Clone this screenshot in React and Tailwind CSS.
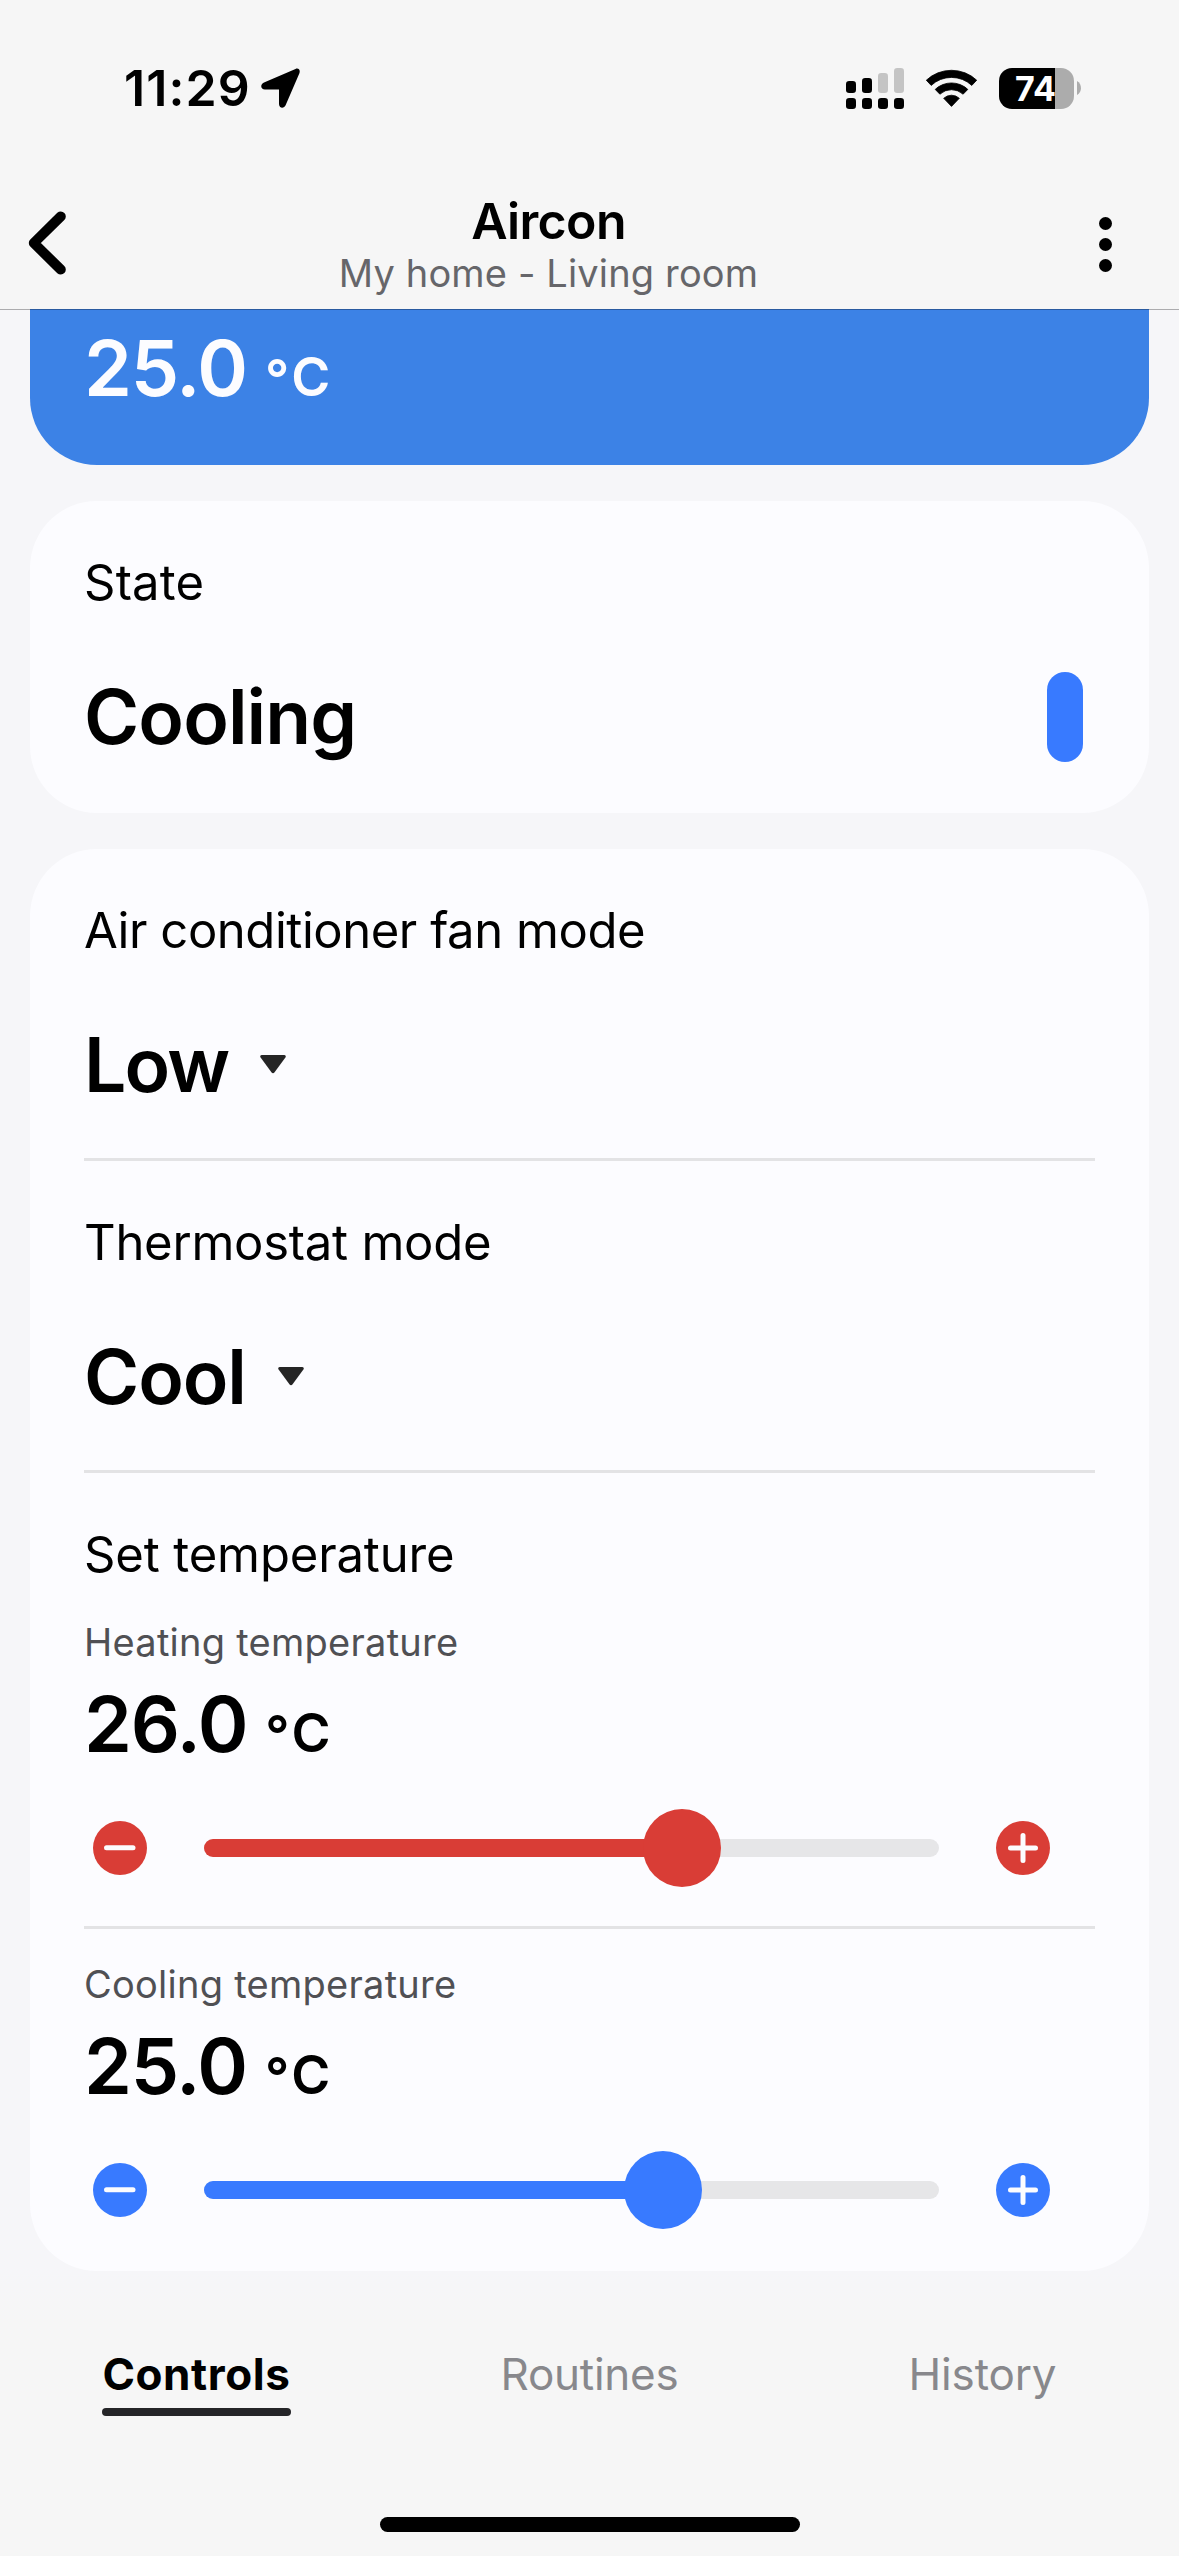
import React from "react";

function SignalIcon() {
  const bars = [
    { x: 0, y: 13, h: 12, fill: "#000" },
    { x: 16, y: 10, h: 15, fill: "#000" },
    { x: 32, y: 5, h: 20, fill: "#c4c4c4" },
    { x: 48, y: 0, h: 25, fill: "#c4c4c4" },
  ];
  return (
    <svg width="58" height="41" viewBox="0 0 58 41">
      {bars.map((b) => (
        <g key={b.x}>
          <rect x={b.x} y={b.y} width="10" height={b.h} rx="3.2" fill={b.fill} />
          <rect x={b.x} y="30" width="10" height="11" rx="3.2" fill="#000" />
        </g>
      ))}
    </svg>
  );
}

function WifiIcon() {
  return (
    <svg width="51" height="41" viewBox="0 0 51 41" className="ml-[22px]">
      <g stroke="#000" strokeWidth="0.8" strokeLinejoin="round">
        <path d="M.3 12.2A37 37 0 0 1 50.7 12.2L45.8 17.4A29.8 29.8 0 0 0 5.2 17.4Z" />
        <path d="M9.2 21.4A23.8 23.8 0 0 1 41.8 21.4L37.1 26.2A17.2 17.2 0 0 0 13.9 26.2Z" />
        <path d="M17.7 30.3A11.4 11.4 0 0 1 33.3 30.3L25.5 38.4Z" />
      </g>
    </svg>
  );
}

function Battery() {
  return (
    <div className="ml-[22px] flex items-center">
      <div className="flex h-[41px] w-[75px] items-center overflow-hidden rounded-[13px] bg-[linear-gradient(to_right,#000_56px,#acacac_56px)] pl-[16px]">
        <span className="text-[34px] leading-[41px] font-bold tracking-[0.2px] text-white">74</span>
      </div>
      <svg width="4" height="14" viewBox="0 0 4 14" className="ml-[3px]">
        <path d="M0 0C5.3 3 5.3 11 0 14Z" fill="#acacac" />
      </svg>
    </div>
  );
}

function StatusBar() {
  return (
    <div className="flex h-[176px] items-center justify-between pr-[98px] pl-[124px]">
      <div className="flex items-center">
        <span className="text-[50px] leading-[60px] font-semibold tracking-[1.1px]">11:29</span>
        <svg width="40" height="41" viewBox="0 0 40 41" className="ml-[10px]">
          <path d="M34.5.9L3 14.4C-1.2 16.4-.4 21.6 4 21.6H18V36C18 40.3 23 40.9 24.6 37.2L38.4 5.2C39.6 2 37.4-.4 34.5.9Z" />
        </svg>
      </div>
      <div className="flex items-center">
        <SignalIcon />
        <WifiIcon />
        <Battery />
      </div>
    </div>
  );
}

function NavBar() {
  return (
    <div className="flex h-[133px] items-center">
      <button className="flex w-[88px] items-center pl-[28px]" aria-label="Back">
        <svg width="40" height="64" viewBox="0 0 40 64" fill="none" stroke="#000" strokeWidth="10" strokeLinecap="round" strokeLinejoin="round">
          <path d="M32.8 5.4L5.8 32L32.8 58.6" />
        </svg>
      </button>
      <div className="flex flex-1 flex-col items-center gap-[9px] pt-px whitespace-nowrap">
        <h1 className="text-[50px] leading-[50px] font-semibold tracking-[-0.65px]">Aircon</h1>
        <p className="text-[38px] leading-[36px] tracking-[0.15px] text-[#66666a]">My home - Living room</p>
      </div>
      <button className="flex w-[170px] flex-col items-center gap-[8px] pt-[3px] pl-[23px]" aria-label="More options">
        <span className="size-[13px] rounded-full bg-black" />
        <span className="size-[13px] rounded-full bg-black" />
        <span className="size-[13px] rounded-full bg-black" />
      </button>
    </div>
  );
}

function Temperature({ value }) {
  return (
    <div className="flex items-baseline gap-[18px] font-semibold">
      <span className="text-[77px] leading-[80px] tracking-[-1.2px]">{value}</span>
      <span className="text-[53px] leading-[40px] tracking-[2px]">
        <span className="inline-block translate-y-[2px]">°</span>C
      </span>
    </div>
  );
}

function Label({ children, className = "" }) {
  return <h2 className={"text-[49px] leading-[60px] " + className}>{children}</h2>;
}

function Divider() {
  return <div className="h-[3px] w-[1011px] bg-[#e3e3e5]" />;
}

function ModeSection({ label, value, labelClass, valueClass }) {
  return (
    <section className="h-[309px] pt-[52px]">
      <Label className={labelClass}>{label}</Label>
      <button className="mt-[59px] flex h-[90px] items-center gap-[32px]">
        <span className={"text-[75px] leading-[90px] font-semibold " + valueClass}>{value}</span>
        <svg width="26" height="20" viewBox="0 0 26 20">
          <path d="M1.6 0H24.4Q26.6.3 25.4 2.4L14.6 17.2Q13 19.2 11.4 17.2L.6 2.4Q-.6.3 1.6 0Z" fill="#252525" />
        </svg>
      </button>
    </section>
  );
}

function Stepper({ color, plus }) {
  return (
    <button className={"size-[54px] shrink-0 rounded-full " + color} aria-label={plus ? "Increase" : "Decrease"}>
      <svg width="54" height="54" viewBox="0 0 54 54" stroke="#fcfcff" strokeWidth="5" strokeLinecap="round">
        {plus ? <path d="M14.5 27H39.5M27 14.5V39.5" /> : <path d="M13.5 26.7H40" />}
      </svg>
    </button>
  );
}

function Slider({ color, percent }) {
  return (
    <div className="mt-[45px] flex h-[78px] items-center gap-[57px] pl-[9px]">
      <Stepper color={color} />
      <div className="relative h-[18px] w-[735px] rounded-full bg-[#e6e6e8]">
        <div className={"h-full rounded-full " + color} style={{ width: percent + "%" }} />
        <div
          className={"absolute top-1/2 size-[78px] -translate-x-1/2 -translate-y-1/2 rounded-full " + color}
          style={{ left: percent + "%" }}
        />
      </div>
      <Stepper color={color} plus />
    </div>
  );
}

function Setpoint({ label, value, color, percent }) {
  return (
    <div>
      <h3 className="mb-[17px] text-[38px] leading-[50px] tracking-[0.26px] text-[#505054]">{label}</h3>
      <Temperature value={value} />
      <Slider color={color} percent={percent} />
    </div>
  );
}

function TabBar() {
  return (
    <nav className="grid h-[165px] grid-cols-3 justify-items-center pt-[8px] text-[44px] leading-[50px]">
      <button className="flex flex-col items-center self-start">
        <span className="font-bold tracking-[0.6px]">Controls</span>
        <span className="mt-[9px] h-[8px] w-[189px] rounded-full bg-[#252528]" />
      </button>
      <button className="self-start tracking-[-0.25px] text-[#88888c]">Routines</button>
      <button className="self-start tracking-[-0.15px] text-[#88888c]">History</button>
    </nav>
  );
}

export default function App() {
  return (
    <div className="flex h-[2556px] w-[1179px] flex-col overflow-hidden bg-[#f6f6f9] font-['Inter',sans-serif] text-black">
      <header className="relative h-[309px] bg-[#f6f6f6]">
        <StatusBar />
        <NavBar />
        <div className="absolute top-full left-0 z-10 h-px w-full bg-black/30" />
      </header>

      <main className="flex h-[1962px] flex-col gap-[36px] px-[30px]">
        <section className="h-[156px] rounded-b-[67px] bg-[#3c82e6] pt-[19px] pl-[54px] text-[#fcfcff]">
          <Temperature value="25.0" />
        </section>

        <section className="h-[312px] rounded-[67px] bg-[#fcfcff] pt-[52px] pr-[66px] pl-[54px]">
          <Label className="tracking-[0.2px]">State</Label>
          <div className="mt-[59px] flex h-[90px] items-center justify-between">
            <span className="text-[75px] leading-[90px] font-semibold tracking-[-0.9px]">Cooling</span>
            <span className="h-[90px] w-[36px] rounded-full bg-[#387aff]" />
          </div>
        </section>

        <section className="h-[1422px] rounded-[67px] bg-[#fcfcff] pl-[54px]">
          <ModeSection label="Air conditioner fan mode" labelClass="tracking-[-0.45px]" value="Low" valueClass="tracking-[-1.9px]" />
          <Divider />
          <ModeSection label="Thermostat mode" labelClass="tracking-[-0.25px]" value="Cool" valueClass="tracking-[-1.1px]" />
          <Divider />
          <div className="pt-[52px] pb-[39px]">
            <Label className="mb-[32px] tracking-[-0.14px]">Set temperature</Label>
            <Setpoint label="Heating temperature" value="26.0" color="bg-[#d93d36]" percent={65.03} />
          </div>
          <Divider />
          <div className="pt-[30px]">
            <Setpoint label="Cooling temperature" value="25.0" color="bg-[#387aff]" percent={62.45} />
          </div>
        </section>
      </main>

      <footer className="flex flex-1 flex-col bg-[linear-gradient(to_bottom,#f6f6f9,#f6f6f6_50px)] pt-[70px]">
        <TabBar />
        <div className="mt-[11px] h-[15px] w-[420px] self-center rounded-full bg-black" />
      </footer>
    </div>
  );
}
